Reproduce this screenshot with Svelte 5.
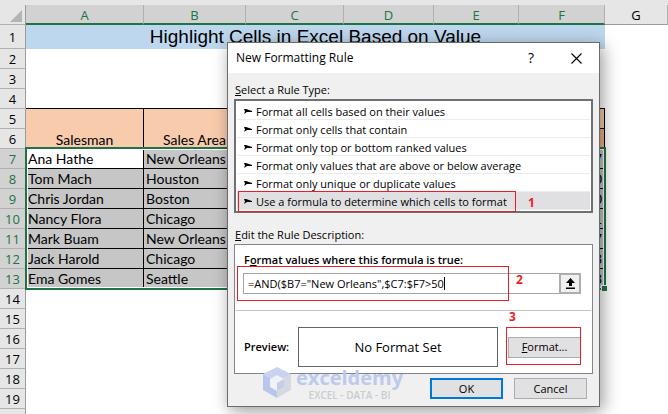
<script>
	const columns = ['A', 'B', 'C', 'D', 'E', 'F'];

	const people = [
		{ name: 'Ana Hathe', area: 'New Orleans', last: 7 },
		{ name: 'Tom Mach', area: 'Houston', last: 0 },
		{ name: 'Chris Jordan', area: 'Boston', last: 0 },
		{ name: 'Nancy Flora', area: 'Chicago', last: 1 },
		{ name: 'Mark Buam', area: 'New Orleans', last: 7 },
		{ name: 'Jack Harold', area: 'Chicago', last: 3 },
		{ name: 'Ema Gomes', area: 'Seattle', last: 3 }
	];

	const rules = [
		'Format all cells based on their values',
		'Format only cells that contain',
		'Format only top or bottom ranked values',
		'Format only values that are above or below average',
		'Format only unique or duplicate values',
		'Use a formula to determine which cells to format'
	];

	let selected = $state(5);
	let formula = $state('=AND($B7="New Orleans",$C7:$F7>50');
</script>

<div class="app">
	<div class="sheet">
		<div class="strip"></div>
		<table>
			<colgroup>
				<col class="c-head" />
				<col class="c-a" />
				<col class="c-b" />
				<col class="c-c" />
				<col class="c-d" />
				<col class="c-e" />
				<col class="c-f" />
				<col />
			</colgroup>
			<thead>
				<tr>
					<th class="corner"><svg width="12" height="12" viewBox="0 0 12 12"><path d="M12 0v12H0z" fill="#b4b4b4" /></svg></th>
					{#each columns as column}
						<th class="col active">{column}</th>
					{/each}
					<th class="col">G</th>
				</tr>
			</thead>
			<tbody>
				<tr class="tall">
					<th>1</th>
					<td class="title" colspan="6">Highlight Cells in Excel Based on Value</td>
					<td></td>
				</tr>
				{#each [2, 3, 4] as n}
					<tr><th>{n}</th><td class:over={n === 4} colspan="6"></td><td></td></tr>
				{/each}
				<tr>
					<th>5</th>
					<td class="head" rowspan="2">Salesman</td>
					<td class="head" rowspan="2">Sales Area</td>
					<td class="head" colspan="4"></td>
					<td></td>
				</tr>
				<tr>
					<th>6</th>
					<td class="head sub"></td>
					<td class="head sub"></td>
					<td class="head sub"></td>
					<td class="head sub"></td>
					<td></td>
				</tr>
				{#each people as person, i}
					<tr>
						<th class="active">{i + 7}</th>
						<td class="cell" class:current={i === 0}>{person.name}</td>
						<td class="cell">{person.area}</td>
						<td class="cell"></td>
						<td class="cell"></td>
						<td class="cell"></td>
						<td class="cell num">{person.last}</td>
						<td></td>
					</tr>
				{/each}
				{#each [14, 15, 16, 17, 18, 19, ''] as n}
					<tr><th>{n}</th><td colspan="7"></td></tr>
				{/each}
			</tbody>
		</table>
		<div class="selection"><i></i></div>
	</div>

	<div class="dialog" role="dialog" aria-labelledby="dialog-title">
		<header>
			<h1 id="dialog-title">New Formatting Rule</h1>
			<button class="bare" aria-label="Help">?</button>
			<button class="bare" aria-label="Close">
				<svg width="11" height="11" viewBox="0 0 11 11"><path d="M.5.5l10 10M10.500.5l-10 10" stroke="#000" stroke-width="1.1" /></svg>
			</button>
		</header>

		<div class="body">
			<p class="caption"><u>S</u>elect a Rule Type:</p>
			<div class="rules">
				{#each rules as rule, i}
					<button class="rule" class:selected={selected === i} onclick={() => (selected = i)}>
						<svg width="8" height="5" viewBox="0 0 8 5"><path d="M0 0h2l6 2v1H3L0 5l1-2.500z" /></svg>
						{rule}
					</button>
				{/each}
			</div>

			<p class="caption second"><u>E</u>dit the Rule Description:</p>
			<div class="panel">
				<label for="formula">F<u>o</u>rmat values where this formula is true:</label>
				<div class="field">
					<input id="formula" type="text" bind:value={formula} spellcheck="false" />
					<span class="caret"></span>
					<button class="pick" aria-label="Collapse dialog">
						<svg width="9" height="11" viewBox="0 0 9 11"><path d="M4.500 0L9 5H6v3H3V5H0zM0 9.500h9v1.500H0z" /></svg>
					</button>
				</div>
				<hr />
				<div class="preview">
					<strong>Preview:</strong>
					<div class="sample">No Format Set</div>
					<button class="push"><span><u>F</u>ormat...</span></button>
				</div>
			</div>

			<footer>
				<button class="push primary">OK</button>
				<button class="push">Cancel</button>
			</footer>
		</div>

		<div class="watermark">
			<svg width="28" height="31" viewBox="0 0 28 31">
				<path d="M14 0l14 7-14 8L0 7z" fill="#c9d2ee" />
				<path d="M0 7l14 8v16L0 23z" fill="#b9c6ec" />
				<path d="M28 7l-14 8v16l14-8z" fill="#d5dae2" />
				<path d="M14 8l7 4v8l-7 4-7-4v-8z" fill="#f0f2f8" />
				<path d="M14 16l7-4v8l-7 4z" fill="#c4cfe6" />
			</svg>
			<div>
				<b>exceldemy</b>
				<small>EXCEL - DATA - BI</small>
			</div>
		</div>

		<div class="mark one"><span>1</span></div>
		<div class="mark two"><span>2</span></div>
		<div class="mark three"><span>3</span></div>
	</div>
</div>

<style>
	:global(body) {
		margin: 0;
	}

	.app {
		position: relative;
		height: 100vh;
		overflow: hidden;
		background: #fff;
		color: #000;
		font-family: 'Open Sans', 'Noto Sans', sans-serif;
		font-size: 11px;
	}

	.app * {
		box-sizing: border-box;
	}

	.sheet {
		position: relative;
	}

	.strip {
		height: 5px;
		background: #e6e6e6;
	}

	table {
		width: 100%;
		table-layout: fixed;
		border-collapse: separate;
		border-spacing: 0;
		font-family: Lato, sans-serif;
		font-size: 14px;
		line-height: 16px;
	}

	.c-head { width: 26px; }
	.c-a { width: 118px; }
	.c-b { width: 102px; }
	.c-c { width: 98px; }
	.c-d { width: 90px; }
	.c-e { width: 85px; }
	.c-f { width: 86px; }

	th, td {
		height: 20px;
		padding: 0;
		overflow: hidden;
		white-space: nowrap;
	}

	th {
		padding-top: 1px;
		font-weight: 400;
		font-family: 'Open Sans', sans-serif;
		font-size: 13px;
		background: #e6e6e6;
		border-right: 1px solid #9b9b9b;
		border-bottom: 1px solid #b0b0b0;
	}

	th.active {
		background: #d2d2d2;
		color: #217346;
	}

	.corner {
		padding: 3px 3px 0 0;
		text-align: right;
	}

	.corner svg {
		display: block;
		margin-left: auto;
	}

	.col {
		border-right-color: #b0b0b0;
		border-bottom-color: #9b9b9b;
	}

	.col.active {
		border-bottom: 2px solid #217346;
	}

	.tall th, .tall td {
		height: 24px;
	}

	.title {
		background: #bdd7ee;
		font-family: 'Liberation Sans', sans-serif;
		font-size: 19px;
		line-height: 22px;
		text-align: center;
	}

	.over {
		border-bottom: 1px solid #000;
	}

	.head {
		background: #f8cbad;
		border-right: 1px solid #000;
		border-bottom: 1px solid #000;
		text-align: center;
		vertical-align: bottom;
	}

	.sub {
		background: #f4b084;
	}

	.cell {
		padding: 1px 0 0 2px;
		background: #c6c6c6;
		border-right: 1px solid #000;
		border-bottom: 1px solid #000;
	}

	.current {
		background: #fff;
	}

	.num {
		padding-right: 2px;
		text-align: right;
	}

	.selection {
		position: absolute;
		left: 25px;
		top: 147px;
		width: 581px;
		height: 143px;
		border: 2px solid #217346;
		box-shadow: inset 0 0 0 1px #fff;
	}

	.selection i {
		position: absolute;
		right: -3px;
		bottom: -3px;
		width: 6px;
		height: 6px;
		background: #217346;
		border: solid #fff;
		border-width: 1px 0 0 1px;
	}

	.dialog {
		position: absolute;
		left: 227px;
		top: 42px;
		width: 373px;
		background: #f0f0f0;
		border: 1px solid #6b6b6b;
		box-shadow: 3px 4px 16px rgba(0, 0, 0, 0.4);
		line-height: 16px;
	}

	header {
		display: flex;
		align-items: center;
		height: 30px;
		padding: 0 13px 0 8px;
		background: #fff;
	}

	h1 {
		flex: 1;
		margin: 0;
		font-size: 12px;
		font-weight: 400;
	}

	button {
		padding: 0;
		border: 0;
		background: none;
		color: inherit;
		font: inherit;
	}

	.bare {
		display: flex;
		align-items: center;
		justify-content: center;
		width: 20px;
		height: 20px;
		margin-left: 25px;
		font-size: 14px;
	}

	.body {
		padding: 9px 6px 7px;
	}

	.caption {
		margin: 0 0 1px 1px;
	}

	.second {
		margin-top: 14px;
	}

	.rules {
		padding: 1px;
		background: #fff;
		border: 2px solid #6e7074;
	}

	.rule {
		display: flex;
		align-items: center;
		gap: 4px;
		width: 100%;
		height: 18px;
		padding: 2px 0 0 7px;
		border-bottom: 1px solid #ececec;
		white-space: nowrap;
	}

	.rule.selected {
		background: #e0e0e3;
	}

	.panel {
		padding: 7px 1px 6px;
		background: #fff;
		border: 1px solid #83838f;
	}

	label {
		display: block;
		padding-left: 8px;
		font-weight: 600;
	}

	.field {
		display: flex;
		position: relative;
		margin: 5px 10px 0 7px;
	}

	input {
		flex: 1;
		min-width: 0;
		height: 21px;
		padding: 0 4px;
		border: 1px solid #a5a5a5;
		border-right: 0;
		background: #fff;
		font: inherit;
		outline: 0;
	}

	.caret {
		position: absolute;
		left: 201px;
		top: 4px;
		width: 1px;
		height: 13px;
		background: #000;
	}

	.pick {
		display: flex;
		align-items: center;
		justify-content: center;
		width: 22px;
		height: 21px;
		border: 2px solid #adadad;
		background: #f0f0f2;
	}

	hr {
		height: 1px;
		margin: 16px 0;
		border: 0;
		background: #c4c4c4;
	}

	.preview {
		display: flex;
		align-items: center;
		padding: 0 10px 0 8px;
	}

	.preview strong {
		width: 54px;
		font-weight: 600;
	}

	.sample {
		flex: 1;
		height: 40px;
		margin-right: 10px;
		border: 1px solid #646464;
		font-size: 13px;
		line-height: 39px;
		text-align: center;
	}

	.push {
		width: 73px;
		height: 21px;
		border: 1px solid #adadad;
		background: #e1e1e3;
	}

	.primary {
		border: 2px solid #0078d7;
	}

	footer {
		display: flex;
		justify-content: flex-end;
		gap: 11px;
		padding: 4px 6px 0 0;
	}

	.watermark {
		position: absolute;
		left: 35px;
		top: 324px;
		display: flex;
		gap: 5px;
		pointer-events: none;
	}

	.watermark b {
		display: block;
		color: #bdc9ee;
		font-size: 20px;
		line-height: 22px;
	}

	.watermark small {
		display: block;
		color: #c9ccd2;
		font-size: 10px;
		font-weight: 600;
		line-height: 12px;
		text-align: center;
	}

	.mark {
		position: absolute;
		border: 1px solid #ed1c24;
		pointer-events: none;
	}

	.mark span {
		position: absolute;
		color: #ed1c24;
		font-size: 12px;
		font-weight: 700;
	}

	.one { left: 10px; top: 148px; width: 278px; height: 21px; }
	.one span { left: 289px; top: 3px; }
	.two { left: 9px; top: 223px; width: 272px; height: 35px; }
	.two span { left: 278px; top: 5px; }
	.three { left: 278px; top: 284px; width: 75px; height: 38px; }
	.three span { left: 2px; top: -19px; }
</style>
